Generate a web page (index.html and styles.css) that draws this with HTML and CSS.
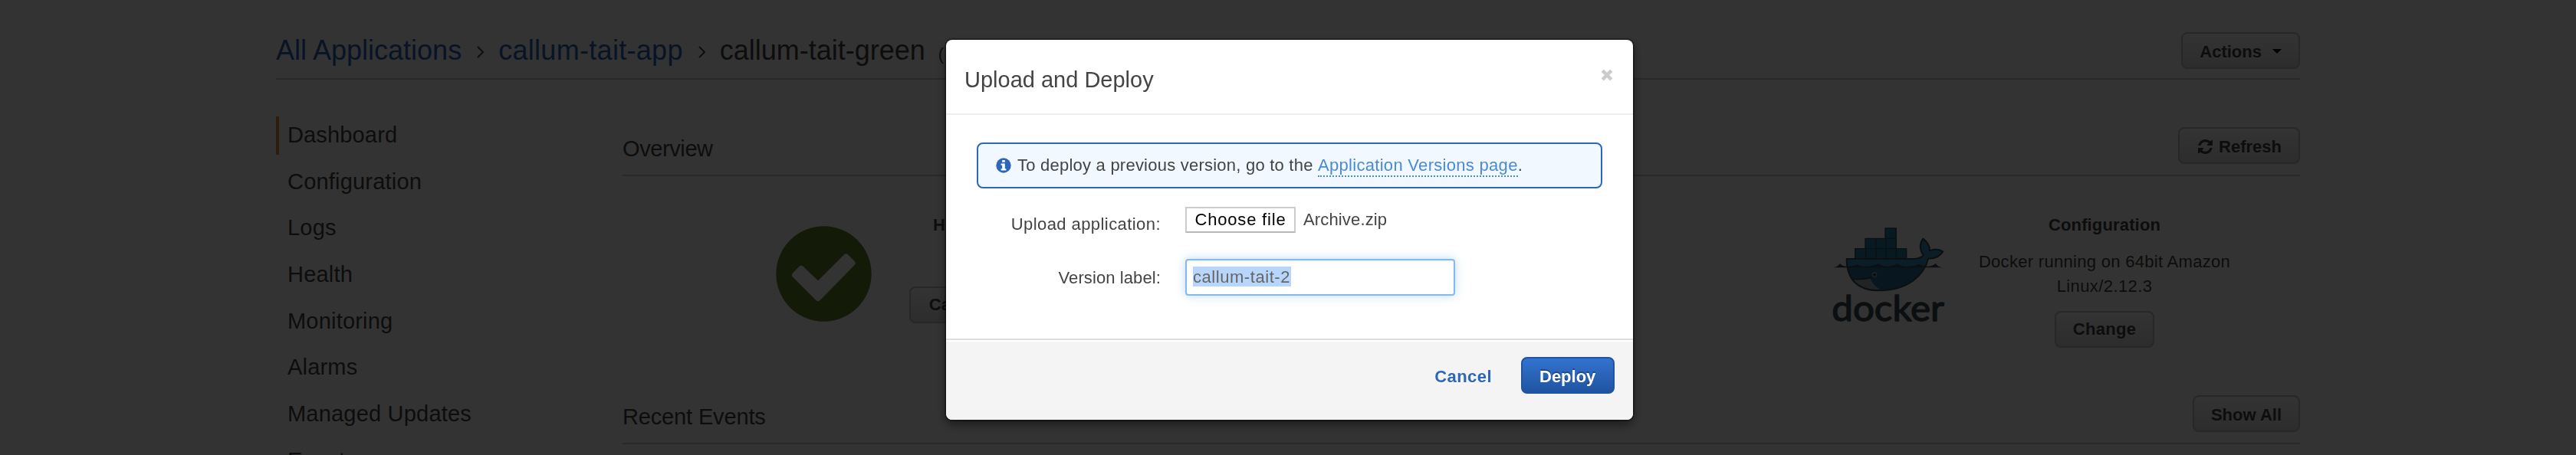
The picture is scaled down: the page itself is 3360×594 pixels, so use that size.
FILE: index.html
```
<!DOCTYPE html>
<html lang="en">
<head>
<meta charset="utf-8">
<title>callum-tait-green</title>
<link rel="stylesheet" href="styles.css">
</head>
<body>
<div class="page">
  <header class="page-header">
    <nav class="breadcrumb">
      <a class="crumb">All Applications</a>
      <svg class="chevron" viewBox="0 0 12 16"><path d="M2 1l7 7-7 7"/></svg>
      <a class="crumb crumb-app">callum-tait-app</a>
      <svg class="chevron" viewBox="0 0 12 16"><path d="M2 1l7 7-7 7"/></svg>
      <span class="crumb-current">callum-tait-green</span>
      <span class="crumb-meta">(</span>
    </nav>
    <button class="btn">Actions<span class="caret"></span></button>
  </header>
  <div class="content">
    <ul class="sidebar">
      <li class="active">Dashboard</li>
      <li>Configuration</li>
      <li>Logs</li>
      <li>Health</li>
      <li>Monitoring</li>
      <li>Alarms</li>
      <li>Managed Updates</li>
      <li>Events</li>
    </ul>
    <main class="main">
      <div class="section-header">
        <h2 class="tight">Overview</h2>
        <button class="btn"><svg class="refresh" viewBox="0 0 1536 1536"><path d="M1511 928q0 5-1 7-64 268-268 434.500T764 1536q-146 0-282.500-55T238 1324l-129 129q-19 19-45 19t-45-19-19-45V960q0-26 19-45t45-19h448q26 0 45 19t19 45-19 45l-137 137q71 66 161 102t187 36q134 0 250-65t186-179q11-17 53-117 8-23 30-23h192q13 0 22.500 9.500t9.500 22.500zm25-800v448q0 26-19 45t-45 19h-448q-26 0-45-19t-19-45 19-45l138-138Q969 256 768 256q-134 0-250 65T332 500q-11 17-53 117-8 23-30 23H50q-13 0-22.500-9.500T18 608v-7q65-268 270-434.500T768 0q146 0 284 55.500T1297 212l130-129q19-19 45-19t45 19 19 45z"/></svg>Refresh</button>
      </div>
      <div class="overview">
        <svg class="health-icon" viewBox="0 0 125 125"><circle cx="62.500" cy="62.500" r="62.200"/><path d="M25 64L33 56L55 77L91.500 40.500L99.500 48.500L55 94Z"/></svg>
        <div class="health">
          <h3>Health</h3>
          <button class="btn">Causes</button>
        </div>
        <svg class="docker" viewBox="84 75 450 384">
          <g class="boxes">
            <path d="M297 84h43v40h-43zM219 124h41v40h-41zM260 124h39v40h-39zM299 124h41v40h-41zM179 164h42v40h-42zM221 164h40v40h-40zM261 164h38v40h-38zM299 164h41v40h-41zM340 164h40v40h-40z"/>
          </g>
          <path class="body" d="M146 204H405C425 203 438 198 446 190C430 165 430 145 445 125C465 140 472 155 471 172C490 164 508 166 523 175C508 197 490 204 466 202C450 265 390 328 270 328C190 328 146 285 146 204Z"/>
          <path class="depth" d="M149 236H449C428 290 370 325 270 325C200 325 155 290 149 236Z"/>
          <path class="belly" d="M170 285Q210 286 239 282Q250 308 276 323Q208 328 170 285Z"/>
          <path class="outline" d="M146 204H405C425 203 438 198 446 190C430 165 430 145 445 125C465 140 472 155 471 172C490 164 508 166 523 175C508 197 490 204 466 202C450 265 390 328 270 328C190 328 146 285 146 204Z"/>
          <path class="outline" d="M168 283Q215 286 250 273"/>
          <path class="wave" d="M92 238Q114 234 120 221Q128 234 152 233Q176 233 186 225Q198 235 225 233Q256 232 270 222Q284 234 308 233Q333 231 345 222Q358 235 384 233Q410 233 430 224Q444 234 462 233Q484 232 494 221Q501 234 522 238Z"/>
          <circle class="eye-ring" cx="255" cy="266" r="10"/><circle class="eye" cx="255" cy="266" r="6"/>
          <text class="wordmark" x="88" y="446" textLength="440" lengthAdjust="spacingAndGlyphs">docker</text>
        </svg>
        <div class="configuration">
          <h3>Configuration</h3>
          <p>Docker running on 64bit Amazon <span class="version">Linux/2.12.3</span></p>
          <button class="btn btn-change">Change</button>
        </div>
      </div>
      <div class="section-header">
        <h2>Recent Events</h2>
        <button class="btn">Show All</button>
      </div>
    </main>
  </div>
</div>
<div class="overlay">
  <section class="modal">
    <header class="modal-header">
      <h1>Upload and Deploy</h1>
      <svg class="close" viewBox="0 0 16 16"><path d="M2.200 2.200l11.600 11.600M13.800 2.200L2.200 13.800"/></svg>
    </header>
    <div class="modal-body">
      <div class="alert">
        <svg class="info" viewBox="0 0 20 20"><circle cx="10" cy="10" r="9.700"/><path d="M8.200 2.900h3.600v2.900H8.200zM6.600 7.600h5.200v6.600h1.600v2.300H6.600v-2.300h1.600V9.800H6.600z"/></svg>
        <span>To deploy a previous version, go to the <a>Application Versions page</a>.</span>
      </div>
      <div class="row row-file">
        <label class="label-upload">Upload application:</label>
        <span class="file-button">Choose file</span>
        <span class="file-name">Archive.zip</span>
      </div>
      <div class="row row-version">
        <label class="label-version">Version label:</label>
        <div class="input"><span class="selection">callum-tait-2</span></div>
      </div>
    </div>
    <footer class="modal-footer">
      <a class="cancel">Cancel</a>
      <button class="btn btn-primary">Deploy</button>
    </footer>
  </section>
</div>
</body>
</html>
```
FILE: styles.css
```
* { box-sizing: border-box; }
html, body { height: 594px; overflow: hidden; }
body {
  margin: 0;
  background: #fff;
  color: #444;
  font: 22px/32px "Liberation Sans", Arial, sans-serif;
}
h1, h2, h3, p, ul { margin: 0; padding: 0; font-weight: normal; }

.page { width: 2640px; height: 594px; margin-left: 360px; overflow: hidden; }
.page-header {
  display: flex;
  justify-content: space-between;
  height: 104px;
  padding-top: 42px;
  border-bottom: 2px solid #ccc;
}
.breadcrumb { display: flex; align-items: baseline; font-size: 36px; line-height: 47px; }
.crumb { color: #2a65b8; }
.crumb-app { letter-spacing: 0.3px; }
.chevron { width: 12px; height: 16px; margin: 18px 17px 0 19px; align-self: flex-start; }
.chevron path { fill: none; stroke: #444; stroke-width: 2; }
.crumb-meta { margin-left: 17px; font-size: 22px; }

.btn {
  display: flex;
  align-items: center;
  height: 48px;
  padding: 4px 22px 0;
  border: 2px solid #c3c3c3;
  border-radius: 8px;
  background: linear-gradient(#fff, #dedede);
  color: #444;
  font: bold 22px/40px "Liberation Sans", Arial, sans-serif;
  text-shadow: 0 2px 2px rgba(255, 255, 255, 0.4);
}
.caret {
  margin: 0 0 2px 14px;
  border: 6px solid transparent;
  border-top-color: #000;
  border-bottom: 0;
}
.refresh { width: 19px; height: 19px; margin: 0 8px 1px 2px; fill: #444; }

.content { display: flex; }
.sidebar { width: 452px; padding-top: 48px; list-style: none; font-size: 29px; letter-spacing: 0.2px; }
.sidebar li {
  height: 50px;
  margin-bottom: 10.67px;
  padding-left: 11px;
  border-left: 4px solid transparent;
  line-height: 49px;
}
.sidebar .active { border-left-color: #e8913c; letter-spacing: 0.15px; }
.main { flex: 1; padding-top: 62px; }
.section-header {
  display: flex;
  justify-content: space-between;
  height: 64px;
  border-bottom: 2px solid #ccc;
}
.section-header h2 { font-size: 29px; line-height: 56px; letter-spacing: -0.15px; }
.section-header .tight { letter-spacing: -0.4px; }

.overview { display: flex; align-items: flex-start; height: 286px; padding-left: 200px; }
.health-icon { width: 125px; height: 125px; margin-top: 62px; }
.health-icon circle { fill: #648328; }
.health-icon path { fill: #fff; stroke: #fff; stroke-width: 8; stroke-linejoin: round; }
.health-icon, .docker { margin-top: 65px; }
.health, .configuration { display: flex; flex-direction: column; align-items: center; padding-top: 48px; }
.health { width: 130px; margin-left: 49px; }
.health .btn { width: 130px; justify-content: center; margin-top: 64px; padding: 0; }
.health h3, .configuration h3 { font-size: 22px; font-weight: bold; letter-spacing: 0.15px; }
.configuration { width: 340px; margin-left: 37px; text-align: center; }
.configuration p { margin: 16px 0; letter-spacing: 0.3px; }
.version { letter-spacing: 0.4px; }
.btn-change { padding-top: 0; letter-spacing: 0.3px; }

.docker { width: 150px; height: 128px; margin-left: 1072px; }
.boxes path { fill: #2384ac; stroke: #394d54; stroke-width: 4; }
.body { fill: #3a90bd; }
.depth { fill: #24719a; }
.belly { fill: #a4b4ba; }
.outline { fill: none; stroke: #394d54; stroke-width: 6; stroke-linejoin: round; }
.wave { fill: #394d54; }
.eye-ring { fill: #a0b0b5; }
.eye { fill: #2a3a40; }
.wordmark { fill: #394d54; stroke: #394d54; stroke-width: 4; stroke-linejoin: round; font: 138px Lato, sans-serif; }

.overlay {
  position: fixed;
  inset: 0;
  padding: 52px 0 0 1234px;
  background: rgba(0, 0, 0, 0.8);
}
.modal {
  width: 896px;
  height: 496px;
  border-radius: 8px;
  background: #fff;
  box-shadow: 0 0 0 2px rgba(0, 0, 0, 0.3), 0 6px 14px rgba(0, 0, 0, 0.5);
  display: flex;
  flex-direction: column;
  overflow: hidden;
}
.modal-header {
  display: flex;
  justify-content: space-between;
  align-items: flex-start;
  height: 98px;
  padding: 28px 26px 0 24px;
  border-bottom: 2px solid #eee;
}
.modal-header h1 { font-size: 29px; line-height: 48px; }
.close { width: 16px; height: 16px; margin-top: 10px; }
.close path { stroke: #ccc; stroke-width: 4.500; }
.modal-body { flex: 1; padding: 36px 40px 0; }
.alert {
  display: flex;
  align-items: center;
  height: 60px;
  padding-left: 23px;
  border: 2px solid #2c67ba;
  border-radius: 8px;
  background: #f1f8ff;
  letter-spacing: 0.23px;
}
.info { width: 20px; height: 20px; margin-right: 8px; }
.info circle { fill: #2c67ba; }
.info path { fill: #fff; }
.alert a {
  padding-bottom: 1px;
  border-bottom: 2px dotted #4a8ad8;
  color: #4a8ad8;
  letter-spacing: 0.3px;
}
.row { display: flex; align-items: flex-start; }
.row label { width: 240px; margin-right: 32px; text-align: right; }
.row-file { height: 68px; margin-top: 24px; }
.label-upload { line-height: 45px; letter-spacing: 0.43px; }
.label-version { line-height: 49px; letter-spacing: 0.1px; }
.file-button {
  width: 144px;
  height: 34px;
  border: 2px solid #ccc;
  border-bottom-color: #b8b8b8;
  color: #000;
  line-height: 30px;
  text-align: center;
  letter-spacing: 0.8px;
}
.file-name { margin-left: 10px; line-height: 34px; letter-spacing: 0.15px; }
.input {
  width: 352px;
  height: 48px;
  padding: 8px;
  border: 2px solid #84b9f0;
  border-radius: 4px;
  box-shadow: 0 0 12px rgba(132, 185, 240, 0.55), inset 0 2px 3px rgba(0, 0, 0, 0.06);
}
.selection {
  display: block;
  width: 128px;
  height: 26px;
  background: #b8d6fb;
  color: #666;
  line-height: 28px;
  letter-spacing: 0.55px;
  white-space: nowrap;
}
.modal-footer {
  display: flex;
  justify-content: flex-end;
  height: 106px;
  padding: 22px 24px 0;
  border-top: 2px solid #ddd;
  background: #f4f4f4;
  box-shadow: inset 0 2px #fff;
}
.cancel { margin-right: 38px; color: #2c67ba; font-weight: bold; line-height: 52px; letter-spacing: 0.45px; text-shadow: 0 2px #fff; }
.btn-primary {
  width: 122px;
  border-color: #2054a2;
  background: linear-gradient(#3373cf, #2054a2);
  color: #fff;
  text-shadow: 0 -2px rgba(0, 0, 0, 0.3);
}
```
